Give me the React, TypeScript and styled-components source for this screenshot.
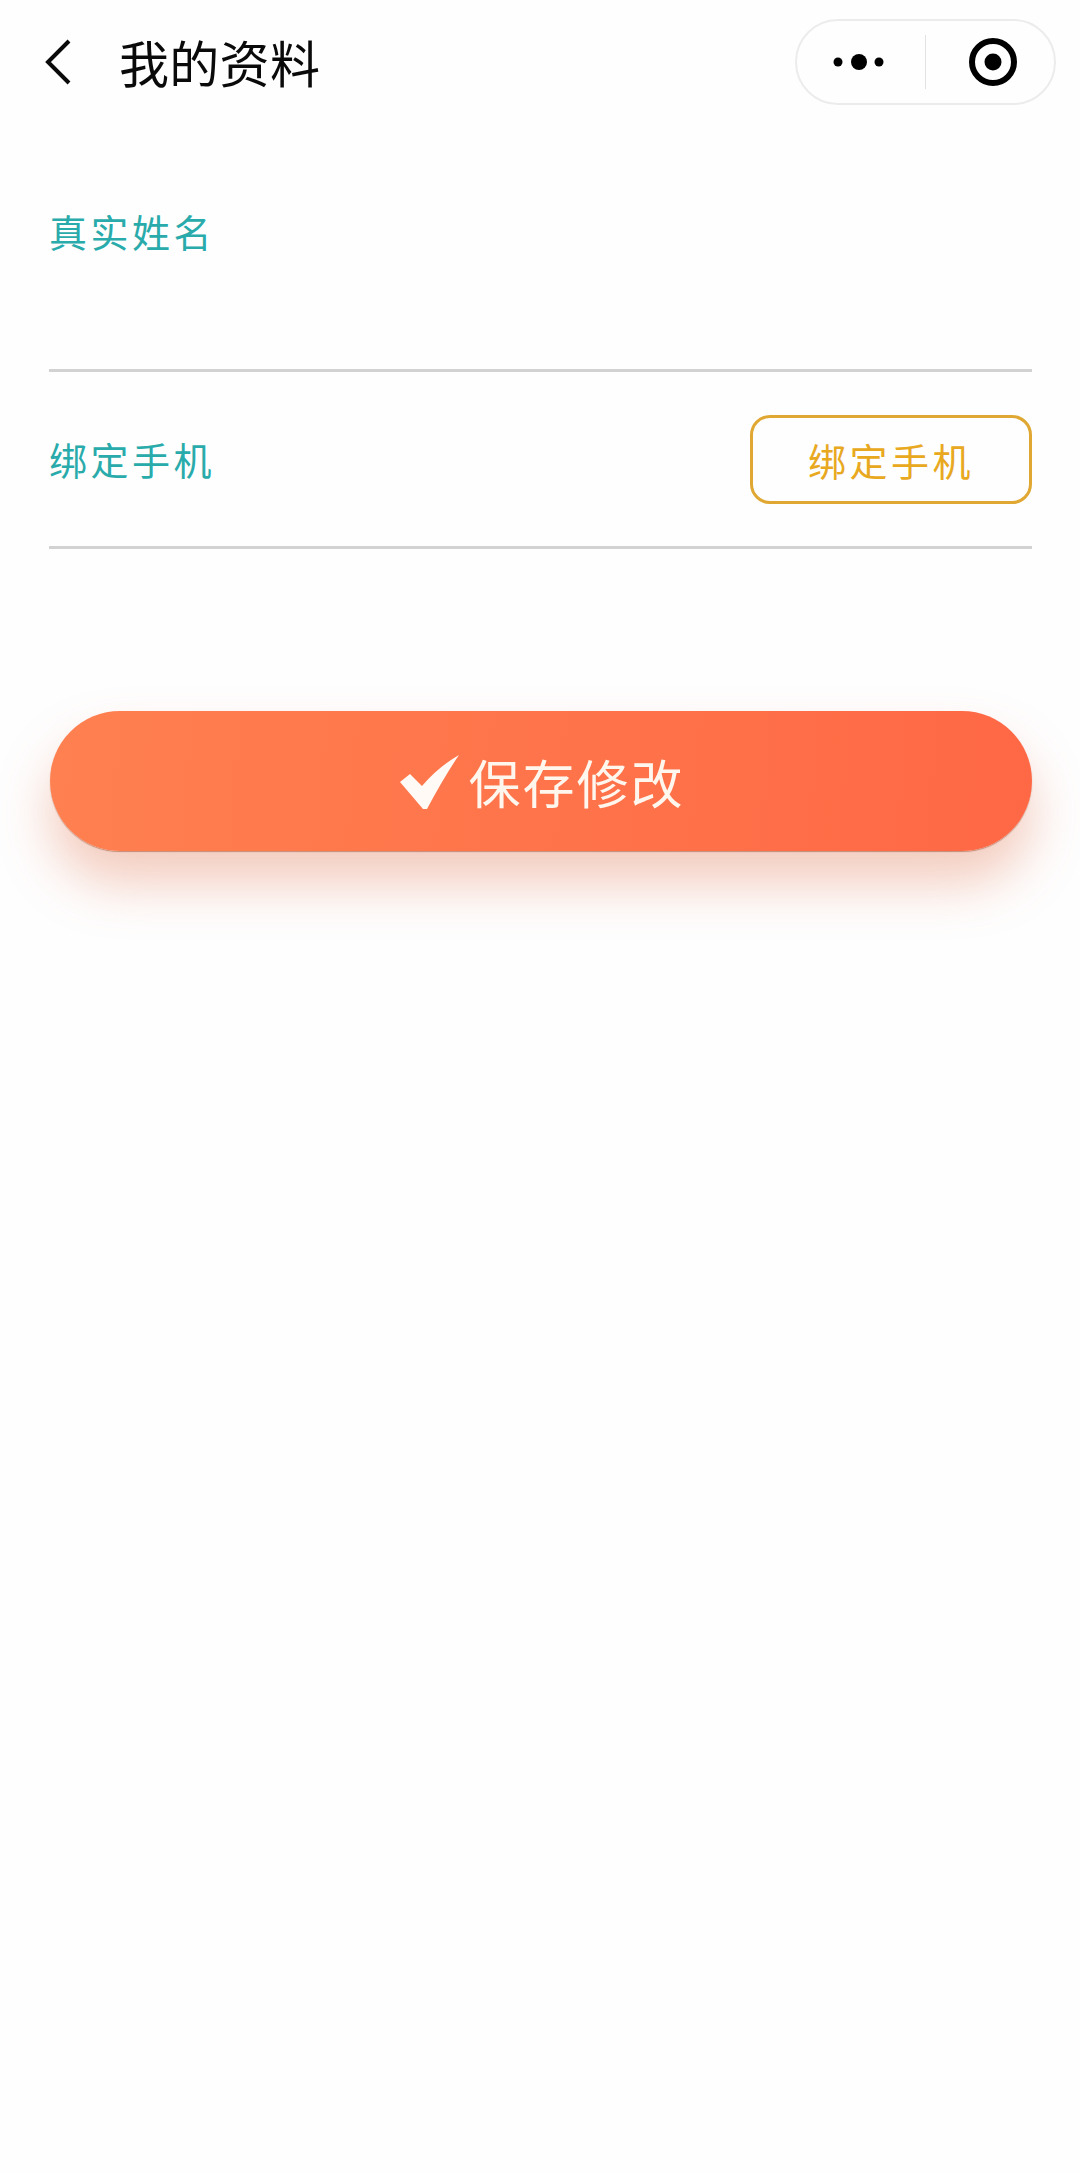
import * as React from "react"
import styled, { createGlobalStyle } from "styled-components"

const GlobalStyle = createGlobalStyle`
  html, body {
    margin: 0;
    padding: 0;
    background: #fefefe;
  }
  body {
    font-family: "Noto Sans CJK SC", "Noto Sans", sans-serif;
  }
`

const Page = styled.div`
  width: 1080px;
  height: 2173px;
  overflow: hidden;
  background: #fefefe;
`

const NavBar = styled.header`
  display: flex;
  align-items: center;
  justify-content: space-between;
  height: 123px;
  padding: 0 24px 0 45px;
`

const NavLeft = styled.div`
  display: flex;
  align-items: center;
  gap: 48px;
`

const Title = styled.h1`
  margin: 0 0 2px;
  font-size: 50px;
  line-height: 60px;
  font-weight: 400;
  letter-spacing: 0.3px;
  color: #0a0a0a;
`

const Capsule = styled.div`
  display: flex;
  align-items: center;
  width: 261px;
  height: 86px;
  margin-top: 1px;
  box-sizing: border-box;
  border: 2px solid #ececec;
  border-radius: 43px;
`

const MenuCell = styled.div`
  flex: 0 0 128px;
  box-sizing: border-box;
  padding-right: 4px;
  display: flex;
  justify-content: center;
`

const CloseCell = styled.div`
  flex: 1;
  height: 54px;
  box-sizing: border-box;
  padding-left: 6px;
  border-left: 1px solid #e2e2e2;
  display: flex;
  align-items: center;
  justify-content: center;
`

const Form = styled.div`
  margin: 0 48px 0 49px;
`

const NameRow = styled.div`
  height: 249px;
  box-sizing: border-box;
  padding-top: 82px;
  border-bottom: 3px solid #d2d2d2;
`

const PhoneRow = styled.div`
  display: flex;
  align-items: center;
  justify-content: space-between;
  height: 177px;
  box-sizing: border-box;
  border-bottom: 3px solid #d2d2d2;
`

const Label = styled.label`
  font-size: 38px;
  line-height: 52px;
  letter-spacing: 3.5px;
  color: #2aabab;
`

const BindButton = styled.button`
  width: 282px;
  height: 89px;
  box-sizing: border-box;
  padding: 0;
  background: transparent;
  border: 3px solid #e0a833;
  border-radius: 20px;
  font-family: inherit;
  font-size: 38px;
  letter-spacing: 3.5px;
  color: #e8a820;
`

const SaveButton = styled.button`
  display: flex;
  align-items: center;
  justify-content: center;
  gap: 8px;
  width: calc(100% - 1px);
  height: 140px;
  margin: 162px 0 0 1px;
  padding: 2px 0 0 3px;
  border: none;
  border-radius: 70px;
  background: linear-gradient(95deg, #ff8050 0%, #ff6845 100%);
  box-shadow: 0 1px 1px rgba(150, 70, 40, 0.5), 0 32px 52px rgba(225, 120, 85, 0.38);
  font-family: inherit;
  font-size: 52px;
  line-height: 60px;
  letter-spacing: 2px;
  color: #fff6ee;
`

export default function App() {
  return (
    <Page>
      <GlobalStyle />
      <NavBar>
        <NavLeft>
          <svg width="26" height="46" viewBox="0 0 26 46" fill="none">
            <polyline points="24,2 3,23 24,44" stroke="#0a0a0a" strokeWidth="4" />
          </svg>
          <Title>我的资料</Title>
        </NavLeft>
        <Capsule>
          <MenuCell>
            <svg width="60" height="18" viewBox="0 0 60 18">
              <circle cx="9" cy="9" r="4.5" fill="#000" />
              <circle cx="30" cy="9" r="8" fill="#000" />
              <circle cx="50" cy="9" r="4.5" fill="#000" />
            </svg>
          </MenuCell>
          <CloseCell>
            <svg width="50" height="50" viewBox="0 0 50 50">
              <circle cx="25" cy="25" r="21" fill="none" stroke="#000" strokeWidth="6" />
              <circle cx="25" cy="25" r="8.5" fill="#000" />
            </svg>
          </CloseCell>
        </Capsule>
      </NavBar>
      <Form>
        <NameRow>
          <Label>真实姓名</Label>
        </NameRow>
        <PhoneRow>
          <Label>绑定手机</Label>
          <BindButton>绑定手机</BindButton>
        </PhoneRow>
        <SaveButton>
          <svg width="60" height="54" viewBox="0 0 60 54">
            <path d="M0 27 L10 19 L22 31 Q38 12 59 0 Q44 22 27 54 L23 54 Z" fill="#fffaf5" />
          </svg>
          保存修改
        </SaveButton>
      </Form>
    </Page>
  )
}
